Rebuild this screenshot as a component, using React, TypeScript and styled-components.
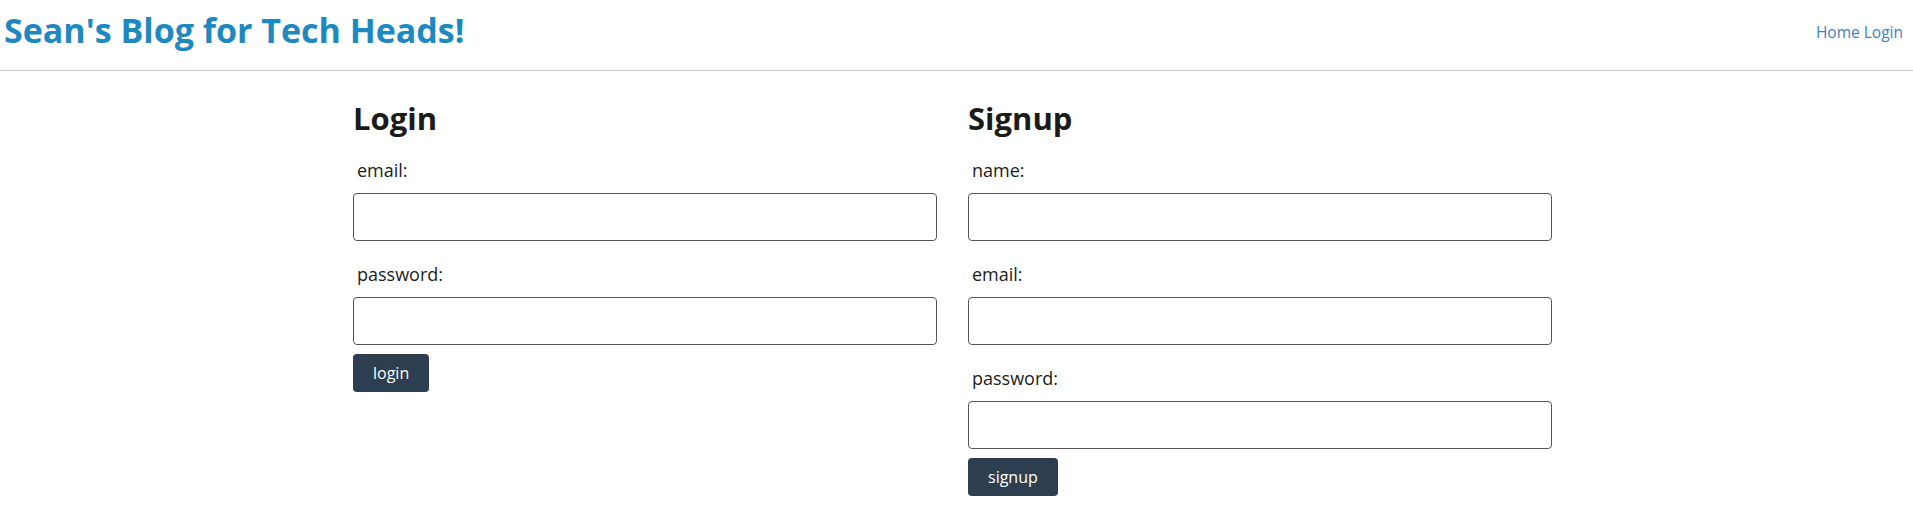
import React from "react";
import styled, { createGlobalStyle } from "styled-components";

const GlobalStyle = createGlobalStyle`
  html, body {
    margin: 0;
    padding: 0;
    background: #ffffff;
  }
  body {
    font-family: "Open Sans", "Noto Sans", sans-serif;
    color: #1c1c1c;
  }
  * { box-sizing: border-box; }
`;

const Header = styled.header`
  display: flex;
  justify-content: space-between;
  align-items: flex-start;
  height: 71px;
  padding: 0 10px 0 4px;
  border-bottom: 1px solid #cccccc;
`;

const Title = styled.h1`
  margin: 10px 0 0;
  font-size: 34px;
  line-height: 41px;
  font-weight: 700;
  color: #1e88c0;
`;

const Nav = styled.nav`
  display: flex;
  gap: 4px;
  margin-top: 22px;
`;

const NavLink = styled.a`
  font-size: 15.5px;
  line-height: 20px;
  color: #3f7fc0;
  text-decoration: none;
`;

const Main = styled.main`
  display: grid;
  grid-template-columns: 584px 584px;
  column-gap: 31px;
  padding-left: 353px;
`;

const Form = styled.form`
  display: flex;
  flex-direction: column;
  align-items: flex-start;
`;

const Heading = styled.h2`
  margin: 29px 0 0;
  font-size: 31px;
  line-height: 37px;
  font-weight: 700;
  color: #1b1b1b;
`;

const Field = styled.div`
  display: flex;
  flex-direction: column;
  width: 100%;
  margin-top: 21px;
`;

const Label = styled.label`
  font-size: 18px;
  line-height: 24px;
  padding-left: 4px;
  color: #1c1c1c;
`;

const Input = styled.input`
  margin-top: 11px;
  width: 100%;
  height: 48px;
  border: 1px solid #555555;
  border-radius: 4px;
  background: #ffffff;
  font-family: inherit;
  font-size: 16px;
  padding: 0 8px;
`;

const Button = styled.button`
  margin-top: 9px;
  height: 38px;
  padding: 0 20px;
  border: none;
  border-radius: 4px;
  background: #2c3e50;
  color: #ffffff;
  font-family: inherit;
  font-size: 16px;
  cursor: pointer;
`;

type FieldDef = { id: string; label: string; type: string };

const loginFields: FieldDef[] = [
  { id: "email-login", label: "email:", type: "text" },
  { id: "password-login", label: "password:", type: "password" },
];

const signupFields: FieldDef[] = [
  { id: "name-signup", label: "name:", type: "text" },
  { id: "email-signup", label: "email:", type: "text" },
  { id: "password-signup", label: "password:", type: "password" },
];

function FormCard({ title, fields, action }: { title: string; fields: FieldDef[]; action: string }) {
  return (
    <Form onSubmit={(e) => e.preventDefault()}>
      <Heading>{title}</Heading>
      {fields.map((f) => (
        <Field key={f.id}>
          <Label htmlFor={f.id}>{f.label}</Label>
          <Input id={f.id} type={f.type} />
        </Field>
      ))}
      <Button type="submit">{action}</Button>
    </Form>
  );
}

export default function App() {
  return (
    <>
      <GlobalStyle />
      <Header>
        <Title>Sean's Blog for Tech Heads!</Title>
        <Nav>
          <NavLink href="#">Home</NavLink>
          <NavLink href="#">Login</NavLink>
        </Nav>
      </Header>
      <Main>
        <FormCard title="Login" fields={loginFields} action="login" />
        <FormCard title="Signup" fields={signupFields} action="signup" />
      </Main>
    </>
  );
}
